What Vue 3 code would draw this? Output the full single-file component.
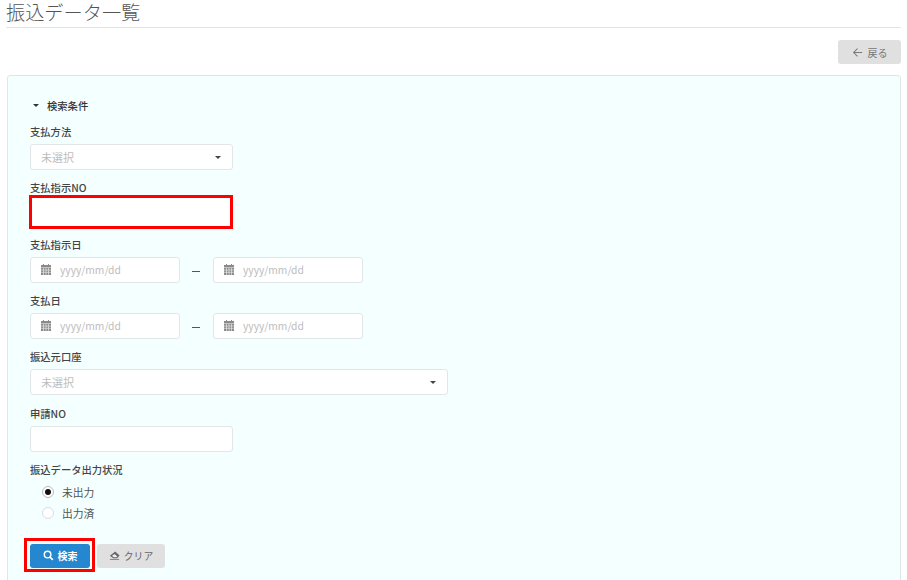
<script setup>
const dateFields = ['支払指示日', '支払日']
</script>

<template>
  <div class="page">
    <h1 class="title">振込データ一覧</h1>
    <div class="toolbar">
      <button class="btn back">
        <svg class="ico" viewBox="0 0 12 12"><path d="M11 6H1.800M6 1.800 1.800 6 6 10.200" fill="none" stroke="#777" stroke-width="1.100"/></svg>
        <span>戻る</span>
      </button>
    </div>
    <section class="card">
      <div class="cond"><span class="tri"></span>検索条件</div>

      <div class="field">
        <label>支払方法</label>
        <div class="control w203 select"><span class="ph">未選択</span><span class="caret"></span></div>
      </div>

      <div class="field">
        <label>支払指示NO</label>
        <div class="control marked"></div>
      </div>

      <div v-for="f in dateFields" :key="f" class="field">
        <label>{{ f }}</label>
        <div class="range">
          <div v-for="n in 2" :key="n" class="control date">
            <svg class="cal" viewBox="0 0 10 11"><path fill="#8a8a8a" d="M2 0h1v1.500H2zM7 0h1v1.500H7zM0 1h10v2.400H0zM0 4h10v7H0z"/><path stroke="#f4f4f4" stroke-width=".6" d="M0 6h10M0 8.300h10M2.500 4v7M5 4v7M7.500 4v7"/></svg>
            <span class="ph">yyyy/mm/dd</span>
          </div>
        </div>
      </div>

      <div class="field">
        <label>振込元口座</label>
        <div class="control w418 select"><span class="ph">未選択</span><span class="caret"></span></div>
      </div>

      <div class="field">
        <label>申請NO</label>
        <div class="control w203"></div>
      </div>

      <div class="field radios">
        <label>振込データ出力状況</label>
        <div class="radio"><span class="dot on"></span>未出力</div>
        <div class="radio"><span class="dot"></span>出力済</div>
      </div>

      <div class="actions">
        <button class="btn primary">
          <svg class="ico" viewBox="0 0 12 12"><circle cx="5" cy="5" r="3.600" fill="none" stroke="#fff" stroke-width="1.600"/><path d="m7.500 7.500 3.200 3.200" stroke="#fff" stroke-width="1.900"/></svg>
          <span>検索</span>
        </button>
        <button class="btn clear">
          <svg class="ico wide" viewBox="0 0 12 12"><path fill="#666" d="M6.800 1.500 11.500 6 8.800 9H4.500L1 6.200z"/><path fill="#eee" d="M3.300 6.300 5 8h3.100l.9-1-2.800-2.700z"/><path stroke="#666" stroke-width=".8" d="M1 10.300h10"/></svg>
          <span>クリア</span>
        </button>
      </div>
    </section>
  </div>
</template>

<style>
html, body { margin: 0; height: 580px; overflow: hidden; background: #fff; }
</style>

<style scoped>
.page {
  height: 580px;
  overflow: hidden;
  padding: 0 6px;
  box-sizing: border-box;
  font-family: "Noto Sans CJK JP", "Liberation Sans", sans-serif;
  color: #333;
}
.title {
  margin: 0;
  box-sizing: border-box;
  height: 28px;
  padding-top: 2px;
  line-height: 20px;
  font-size: 19.200px;
  font-weight: 300;
  color: #555;
  border-bottom: 1px solid #e4e4e4;
}
.toolbar {
  display: flex;
  justify-content: flex-end;
  padding: 12px 0 11px;
}
.btn {
  display: inline-flex;
  align-items: center;
  justify-content: center;
  gap: 4px;
  height: 24px;
  padding: 0;
  border: none;
  border-radius: 3px;
  font: inherit;
  font-size: 10px;
}
.ico { width: 11px; height: 11px; }
.back { width: 63px; background: #e0e0e0; color: #777; gap: 5px; }
.card {
  margin-left: 1px;
  height: 560px;
  box-sizing: border-box;
  padding: 20px 23px 0 22px;
  background: #f4ffff;
  border: 1px solid #dfe6e6;
  border-radius: 3px;
}
.cond {
  display: flex;
  align-items: center;
  height: 18px;
  font-size: 10.300px;
  font-weight: 500;
  margin-left: 3px;
  margin-bottom: 12px;
}
.tri {
  width: 0;
  height: 0;
  margin-right: 8px;
  border-left: 3px solid transparent;
  border-right: 3px solid transparent;
  border-top: 3.500px solid #333;
}
.field { display: flex; flex-direction: column; align-items: flex-start; height: 56.330px; }
.field label {
  height: 12px;
  line-height: 12px;
  font-size: 10.300px;
  font-weight: 500;
  margin-bottom: 6px;
  color: #444;
}
.control {
  box-sizing: border-box;
  height: 26px;
  background: #fff;
  border: 1px solid #e3e6e6;
  border-radius: 3px;
  display: flex;
  align-items: center;
  font-size: 11px;
}
.w203 { width: 203px; }
.w418 { width: 418px; }
.select { justify-content: space-between; padding: 0 11px 0 10px; }
.ph { color: #bdbdbd; }
.caret {
  width: 0;
  height: 0;
  border-left: 3px solid transparent;
  border-right: 3px solid transparent;
  border-top: 3.500px solid #444;
}
.marked {
  width: 204.500px;
  height: 34px;
  margin: -5px 0 0 -1.500px;
  border: 3px solid #f00;
  border-radius: 0;
}
.range { display: flex; gap: 33px; position: relative; }
.range::after {
  content: "";
  position: absolute;
  left: 162px;
  top: 14px;
  width: 8px;
  height: 1px;
  background: #555;
}
.date { width: 150px; padding-left: 10px; gap: 9px; font-size: 10.300px; }
.cal { width: 10px; height: 11px; }
.radios { height: auto; }
.radios label { margin-bottom: 6px; }
.radio {
  display: flex;
  align-items: center;
  height: 21px;
  margin-left: 12px;
  font-size: 10.800px;
  color: #555;
}
.dot {
  box-sizing: border-box;
  width: 12px;
  height: 12px;
  margin-right: 8px;
  background: #fff;
  border: 1px solid #ddd;
  border-radius: 50%;
  position: relative;
}
.dot.on { border-color: #bbb; }
.dot.on::after {
  content: "";
  position: absolute;
  inset: 2px;
  background: #111;
  border-radius: 50%;
}
.actions { display: flex; gap: 7px; margin-top: 20px; }
.primary {
  position: relative;
  width: 60px;
  background: #2487d0;
  color: #fff;
  font-weight: 700;
}
.primary::after {
  content: "";
  position: absolute;
  inset: -6px -5px -4px -6px;
  border: 3px solid #f00;
}
.clear { width: 68px; background: #e0e0e0; color: #666; font-size: 9.800px; }
.wide { width: 11px; }
</style>
